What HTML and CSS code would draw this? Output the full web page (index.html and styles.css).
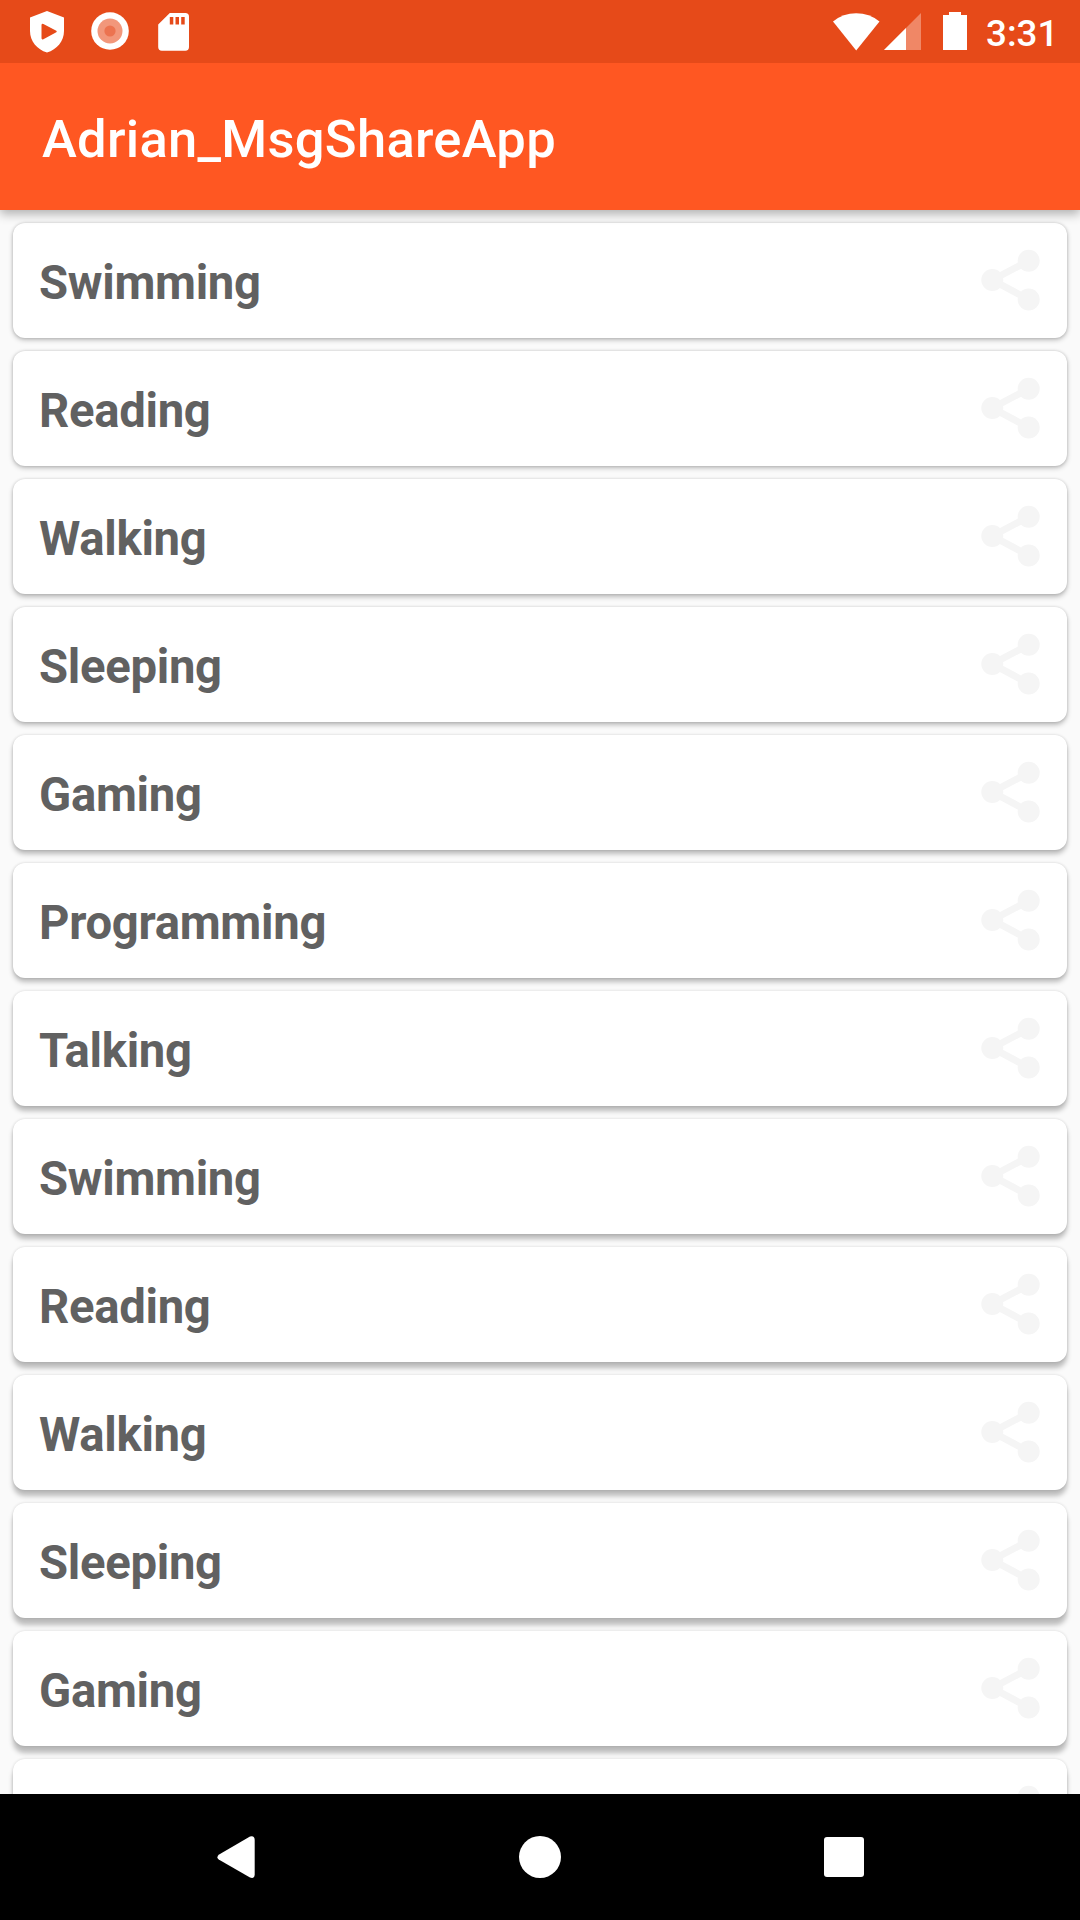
FILE: index.html
```
<!DOCTYPE html>
<html lang="en">
<head>
<meta charset="utf-8">
<title>Adrian_MsgShareApp</title>
<link rel="stylesheet" href="styles.css">
</head>
<body>
<svg class="defs" aria-hidden="true">
  <symbol id="share" viewBox="0 0 60 62">
    <path d="M47.700 11.700 11.300 31 47.700 50.500" fill="none" stroke="currentColor" stroke-width="7"/>
    <circle cx="47.700" cy="11.700" r="11"/><circle cx="11.300" cy="31" r="11"/><circle cx="47.700" cy="50.500" r="11"/>
  </symbol>
</svg>
<div class="screen">
  <header class="status">
    <div class="status-left">
      <svg class="shield" width="34" height="42" viewBox="0 0 34 42"><path fill="#fff" fill-rule="evenodd" d="M17 0 34 6.5V20C34 30 27 38.500 17 41.500 7 38.500 0 30 0 20V6.500ZM11.500 14V27.300Q11.700 29 13.400 28.200L26.300 21.300Q27.300 20.500 26.300 19.700L13.400 12.900Q11.700 12.200 11.500 14Z"/></svg>
      <svg class="record" width="38" height="38" viewBox="0 0 38 38"><circle cx="19" cy="19" r="18.800" fill="#fff"/><circle cx="19" cy="19" r="12.500" fill="#f2977b"/><circle cx="19" cy="19" r="5.600" fill="#ec7350"/></svg>
      <svg class="sdcard" width="31" height="38" viewBox="0 0 31 38"><path fill="#fff" fill-rule="evenodd" d="M11.800 0H27.300Q31 0 31 3.700V34Q31 37.700 27.300 37.700H3.900Q.2 37.700.2 34V11.500ZM11.800 4V11.500H15.300V4ZM17.500 4V11.500H21V4ZM23.200 4V11.500H26.700V4Z"/></svg>
    </div>
    <div class="status-right">
      <svg class="wifi" width="47" height="38" viewBox="0 0 47 38"><path fill="#fff" d="M0 8.500Q10 .3 23.200.3T46.500 8.500L23.200 37.500Z"/></svg>
      <svg class="signal" width="37" height="37" viewBox="0 0 37 37"><path fill="#f08766" d="M37 0V37H0Z"/><path fill="#fff" d="M22 15V37H0Z"/></svg>
      <svg class="battery" width="24" height="38" viewBox="0 0 24 38"><path fill="#fff" d="M6 0H18V3H24V38H0V3H6Z"/></svg>
      <span class="clock">3:31</span>
    </div>
  </header>
  <div class="appbar"><h1>Adrian_MsgShareApp</h1></div>
  <main class="list">
    <article class="card"><span>Swimming</span><svg class="share"><use href="#share"/></svg></article>
    <article class="card"><span>Reading</span><svg class="share"><use href="#share"/></svg></article>
    <article class="card"><span>Walking</span><svg class="share"><use href="#share"/></svg></article>
    <article class="card"><span>Sleeping</span><svg class="share"><use href="#share"/></svg></article>
    <article class="card"><span>Gaming</span><svg class="share"><use href="#share"/></svg></article>
    <article class="card"><span>Programming</span><svg class="share"><use href="#share"/></svg></article>
    <article class="card"><span>Talking</span><svg class="share"><use href="#share"/></svg></article>
    <article class="card"><span>Swimming</span><svg class="share"><use href="#share"/></svg></article>
    <article class="card"><span>Reading</span><svg class="share"><use href="#share"/></svg></article>
    <article class="card"><span>Walking</span><svg class="share"><use href="#share"/></svg></article>
    <article class="card"><span>Sleeping</span><svg class="share"><use href="#share"/></svg></article>
    <article class="card"><span>Gaming</span><svg class="share"><use href="#share"/></svg></article>
    <article class="card"><svg class="share"><use href="#share"/></svg></article>
  </main>
  <nav class="navbar">
    <svg class="back" width="38" height="43" viewBox="0 0 38 43"><path fill="#fff" d="M33 .600Q37.500-.8 37.700 4V38.500Q37.500 43 33 41.500L1.700 23.500Q-.8 21.300 1.700 18.700Z"/></svg>
    <span class="home"></span>
    <span class="recent"></span>
  </nav>
</div>
</body>
</html>
```
FILE: styles.css
```
* { box-sizing: border-box; }
body { margin: 0; font-family: Roboto, sans-serif; background: #fafafa; }
.defs { display: none; }
.screen { display: flex; flex-direction: column; width: 1080px; height: 1920px; overflow: hidden; }

.status { flex: 0 0 63px; display: flex; justify-content: space-between; background: #e64a19; position: relative; z-index: 1; }
.status-left, .status-right { display: flex; align-items: flex-start; }
.status-left { padding-left: 30px; }
.shield { margin-top: 11px; }
.record { margin: 12px 0 0 27px; }
.sdcard { margin: 13px 0 0 29px; }
.status-right { padding-right: 25px; }
.wifi { margin-top: 13px; }
.signal { margin: 13px 0 0 4px; }
.battery { margin: 12px 0 0 22px; }
.clock { width: 69px; margin: 12px 0 0 19px; color: #fff; font-size: 36.75px; font-weight: 500; line-height: 43px; white-space: nowrap; }

.appbar { flex: 0 0 147px; display: flex; align-items: center; padding-left: 42px; background: #ff5722; position: relative; box-shadow: 0 4px 10px rgba(0, 0, 0, .3); }
h1 { margin: 4px 0 0; color: #fff; font-size: 52.5px; font-weight: 500; line-height: 62px; letter-spacing: .28px; }

.list { flex: 1 1 0; min-height: 0; overflow: hidden; display: flex; flex-direction: column; gap: 13px; padding: 13px 13px 0; }
.card { flex: 0 0 115px; display: flex; align-items: flex-start; padding: 26px 26px 0; border-radius: 12px; background: #fff; color: #616161; font-size: 47.25px; font-weight: 700; letter-spacing: -.3px; box-shadow: 0 var(--drop, 2px) 5px rgba(0, 0, 0, .25), 0 0 3px rgba(0, 0, 0, .15); }
.card span { margin-top: 7px; line-height: 55px; }
.share { width: 60px; height: 62px; margin-left: auto; color: #f5f5f5; fill: currentColor; }
.card:nth-child(n+3) { --drop: 3px; }
.card:nth-child(n+5) { --drop: 4px; }
.card:nth-child(n+7) { --drop: 5px; }
.card:nth-child(n+9) { --drop: 6px; }
.card:nth-child(n+11) { --drop: 7px; }

.navbar { flex: 0 0 126px; display: flex; align-items: center; background: #000; padding-left: 217px; }
.home { width: 42px; height: 42px; margin-left: 264px; border-radius: 50%; background: #fff; }
.recent { width: 40px; height: 40px; margin-left: 263px; border-radius: 3px; background: #fff; }
```
